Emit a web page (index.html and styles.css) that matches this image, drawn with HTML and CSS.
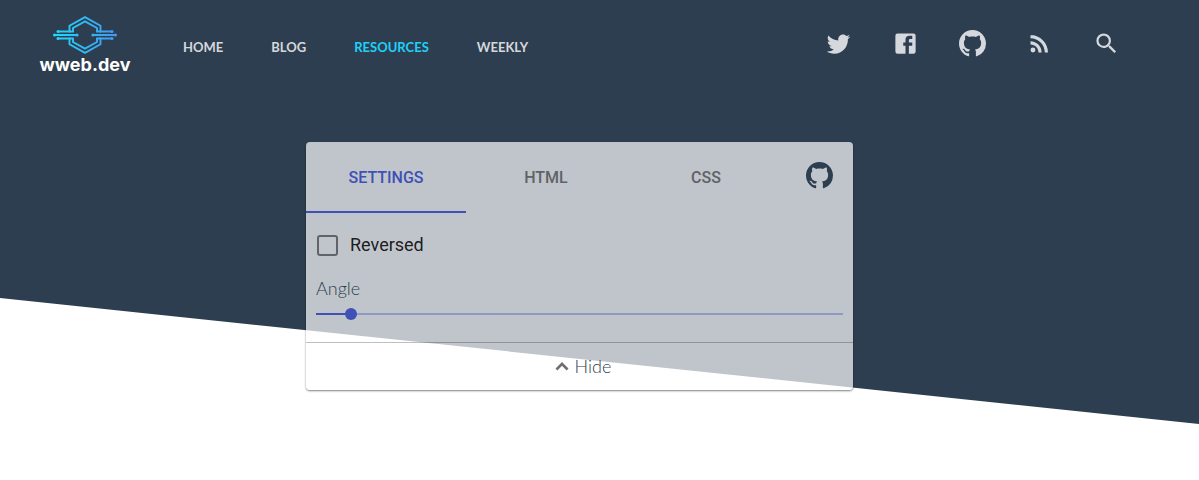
FILE: index.html
```html
<!DOCTYPE html>
<html lang="en">
<head>
<meta charset="utf-8">
<title>wweb.dev - Resources</title>
<link rel="stylesheet" href="styles.css">
</head>
<body>
<svg class="sprite" aria-hidden="true">
  <symbol id="github" viewBox="0 0 16 16"><path d="M8 0C3.58 0 0 3.58 0 8c0 3.54 2.29 6.53 5.47 7.59.4.07.55-.17.55-.38 0-.19-.01-.82-.01-1.49-2.01.37-2.53-.49-2.69-.94-.09-.23-.48-.94-.82-1.13-.28-.15-.68-.52-.01-.53.63-.01 1.08.58 1.23.82.72 1.21 1.87.87 2.33.66.07-.52.28-.87.51-1.07-1.78-.2-3.64-.89-3.64-3.95 0-.87.31-1.59.82-2.15-.08-.2-.36-1.02.08-2.12 0 0 .67-.21 2.2.82.64-.18 1.32-.27 2-.27s1.36.09 2 .27c1.53-1.04 2.2-.82 2.2-.82.44 1.1.16 1.92.08 2.12.51.56.82 1.27.82 2.15 0 3.07-1.87 3.75-3.65 3.95.29.25.54.73.54 1.48 0 1.07-.01 1.93-.01 2.2 0 .21.15.46.55.38A8.01 8.01 0 0 0 16 8c0-4.42-3.58-8-8-8z"/></symbol>
</svg>
<div class="hero">
  <header class="header">
    <a class="logo" href="#">
      <svg class="logo-mark" viewBox="0 0 64 38" aria-hidden="true">
        <defs><linearGradient id="logo-gradient" gradientUnits="userSpaceOnUse" x1="0" y1="0" x2="64" y2="0"><stop offset="0" stop-color="#1fd8fa"/><stop offset="1" stop-color="#4498ef"/></linearGradient></defs>
        <g fill="none" stroke="url(#logo-gradient)" stroke-width="1.9">
          <path d="M5 15.500H16.500V9.700L32 1.200 47.500 9.700V15.500H59M5 22.500H16.500V28.300L32 36.800 47.500 28.300V22.500H59"/>
          <path d="M16 15.500H20V12L32 5.300 44 12V15.500H48M16 22.500H20V26L32 32.700 44 26V22.500H48"/>
        </g>
        <g fill="url(#logo-gradient)"><path d="M1.500 18.100H24v1.800H1.500zM40 18.100h22.500v1.800H40z"/><circle cx="1.600" cy="19" r="1.600"/><circle cx="24" cy="19" r="1.600"/><circle cx="40" cy="19" r="1.600"/><circle cx="62.400" cy="19" r="1.600"/><circle cx="5" cy="15.500" r="1.500"/><circle cx="5" cy="22.500" r="1.500"/><circle cx="59" cy="15.500" r="1.500"/><circle cx="59" cy="22.500" r="1.500"/></g>
      </svg>
      <span class="logo-text">wweb.dev</span>
    </a>
    <nav class="nav">
      <a href="#">HOME</a>
      <a href="#">BLOG</a>
      <a class="current" href="#">RESOURCES</a>
      <a href="#">WEEKLY</a>
    </nav>
    <div class="social">
      <a href="#" aria-label="Twitter"><svg class="icon" viewBox="0 0 24 24"><path d="M22.460 6c-.77.350-1.600.580-2.460.690.880-.530 1.560-1.370 1.880-2.380-.830.500-1.750.850-2.720 1.050C18.370 4.500 17.260 4 16 4c-2.350 0-4.270 1.920-4.270 4.290 0 .340.040.670.110.980C8.280 9.090 5.110 7.380 3 4.790c-.37.630-.58 1.370-.58 2.150 0 1.490.75 2.810 1.910 3.560-.71 0-1.370-.2-1.950-.5v.03c0 2.080 1.480 3.820 3.440 4.210a4.220 4.220 0 0 1-1.930.07 4.280 4.280 0 0 0 4 2.980 8.521 8.521 0 0 1-5.330 1.840c-.34 0-.68-.02-1.020-.06C3.440 20.290 5.700 21 8.120 21 16 21 20.330 14.460 20.330 8.790c0-.19 0-.37-.01-.56.840-.6 1.560-1.360 2.140-2.230z"/></svg></a>
      <a href="#" aria-label="Facebook"><svg class="icon" viewBox="0 0 24 24"><path d="M5 3h14a2 2 0 0 1 2 2v14a2 2 0 0 1-2 2h-4v-7h3v-3h-3V9a1 1 0 0 1 1-1h2V5h-2.500A3.500 3.500 0 0 0 12 8.500V11h-2v3h2v7H5a2 2 0 0 1-2-2V5a2 2 0 0 1 2-2z"/></svg></a>
      <a href="#" aria-label="GitHub"><svg class="icon"><use href="#github"/></svg></a>
      <a href="#" aria-label="RSS"><svg class="icon" viewBox="0 0 24 24"><circle cx="6.180" cy="17.820" r="2.180"/><path d="M4 4.440v2.830c7.030 0 12.730 5.700 12.730 12.730h2.830c0-8.590-6.970-15.560-15.560-15.560zm0 5.660v2.830c3.900 0 7.070 3.170 7.070 7.070h2.830c0-5.470-4.430-9.900-9.900-9.900z"/></svg></a>
      <button type="button" aria-label="Search"><svg class="icon" viewBox="0 0 24 24"><path d="M15.500 14h-.79l-.28-.27A6.471 6.471 0 0 0 16 9.500 6.500 6.500 0 1 0 9.500 16c1.610 0 3.090-.59 4.230-1.570l.27.280v.79l5 4.990L20.490 19l-4.990-5zm-6 0C7.010 14 5 11.990 5 9.500S7.010 5 9.500 5 14 7.010 14 9.500 11.990 14 9.500 14z"/></svg></button>
    </div>
  </header>
  <main class="content">
    <section class="card">
      <div class="tabs" role="tablist">
        <button class="tab selected" type="button" role="tab" aria-selected="true">SETTINGS</button>
        <button class="tab" type="button" role="tab" aria-selected="false">HTML</button>
        <button class="tab" type="button" role="tab" aria-selected="false">CSS</button>
        <a class="source" href="#" aria-label="Source on GitHub"><svg class="icon"><use href="#github"/></svg></a>
      </div>
      <div class="settings">
        <label class="check"><input type="checkbox"><span>Reversed</span></label>
        <label class="angle-label" for="angle">Angle</label>
        <input class="slider" id="angle" type="range" min="0" max="90" value="5">
      </div>
      <button class="hide" type="button"><svg class="chevron" viewBox="0 0 24 24" aria-hidden="true"><path d="M5.500 14.500L12 8l6.500 6.500-1.900 1.900L12 11.800l-4.600 4.600z"/></svg>Hide</button>
    </section>
  </main>
</div>
</body>
</html>
```
FILE: styles.css
```css
* { box-sizing: border-box; }
body { margin: 0; background: #fff; color: #2d3e50; font-family: Lato, sans-serif; }
a { color: inherit; text-decoration: none; }
button { margin: 0; padding: 0; border: 0; background: none; color: inherit; font: inherit; cursor: pointer; }
.sprite { display: none; }
.hero { position: relative; isolation: isolate; min-height: 424px; }
.hero::before { content: ""; position: absolute; inset: 0; z-index: -1; height: 424px; background: #2d3e50; clip-path: polygon(0 0, 100% 0, 100% 100%, 0 298px); }
.header { display: flex; align-items: center; height: 94px; padding: 0 66px 0 40px; color: #d5d8dc; }
.logo { display: flex; flex-direction: column; align-items: center; width: 90px; padding-bottom: 2px; }
.logo-mark { display: block; width: 64px; height: 38px; }
.logo-text { color: #fff; font: bold 18px/22px Inter, sans-serif; }
.nav { display: flex; gap: 48px; margin-left: 53px; font-size: 13px; font-weight: bold; line-height: 20px; }
.current { color: #1fd1f9; }
.social { display: flex; gap: 13px; margin-left: auto; padding-bottom: 8px; }
.social a, .social button { display: flex; align-items: center; justify-content: center; width: 54px; height: 48px; }
.icon { display: block; width: 27px; height: 27px; fill: currentColor; }
.content { display: flex; justify-content: center; padding: 48px 40px 0 0; }
.card { width: 100%; max-width: 547px; overflow: hidden; border-radius: 4px; background: rgba(255, 255, 255, .7); box-shadow: 0 1px 2px rgba(0, 0, 0, .5); }
.tabs { display: flex; height: 71px; color: #5f6266; font: 500 16px/24px Roboto, sans-serif; }
.tab { flex: 1; padding-top: 2px; border-bottom: 2px solid transparent; }
.selected { color: #3f51b5; border-color: #3f51b5; }
.source { display: flex; align-items: center; width: 67px; padding: 0 20px 4px; color: #2d3e50; }
.settings { display: flex; flex-direction: column; padding: 20px 10px 22px; }
.check { display: flex; align-items: center; gap: 12px; height: 24px; color: rgba(0, 0, 0, .87); font: 18px/24px Roboto, sans-serif; }
.check input { appearance: none; width: 21px; height: 21px; margin: 0 0 0 1px; border: 2px solid #606367; border-radius: 3px; }
.angle-label { margin-top: 19px; font-size: 18px; font-weight: 300; line-height: 24px; }
.slider { appearance: none; width: 100%; height: 12px; margin: 8px 0 0; background: linear-gradient(#3f51b5, #3f51b5) 0 50% / 35px 2px no-repeat, linear-gradient(rgba(63, 81, 181, .38), rgba(63, 81, 181, .38)) 0 50% / 100% 2px no-repeat; }
.slider::-webkit-slider-thumb { appearance: none; width: 12px; height: 12px; border-radius: 50%; background: #3f51b5; }
.hide { display: flex; align-items: center; justify-content: center; gap: 1px; width: 100%; height: 48px; padding: 0 0 1px 2px; border-top: 1px solid rgba(0, 0, 0, .25); font-size: 18px; font-weight: 300; }
.chevron { width: 24px; height: 24px; fill: #6f6f6f; }
```
